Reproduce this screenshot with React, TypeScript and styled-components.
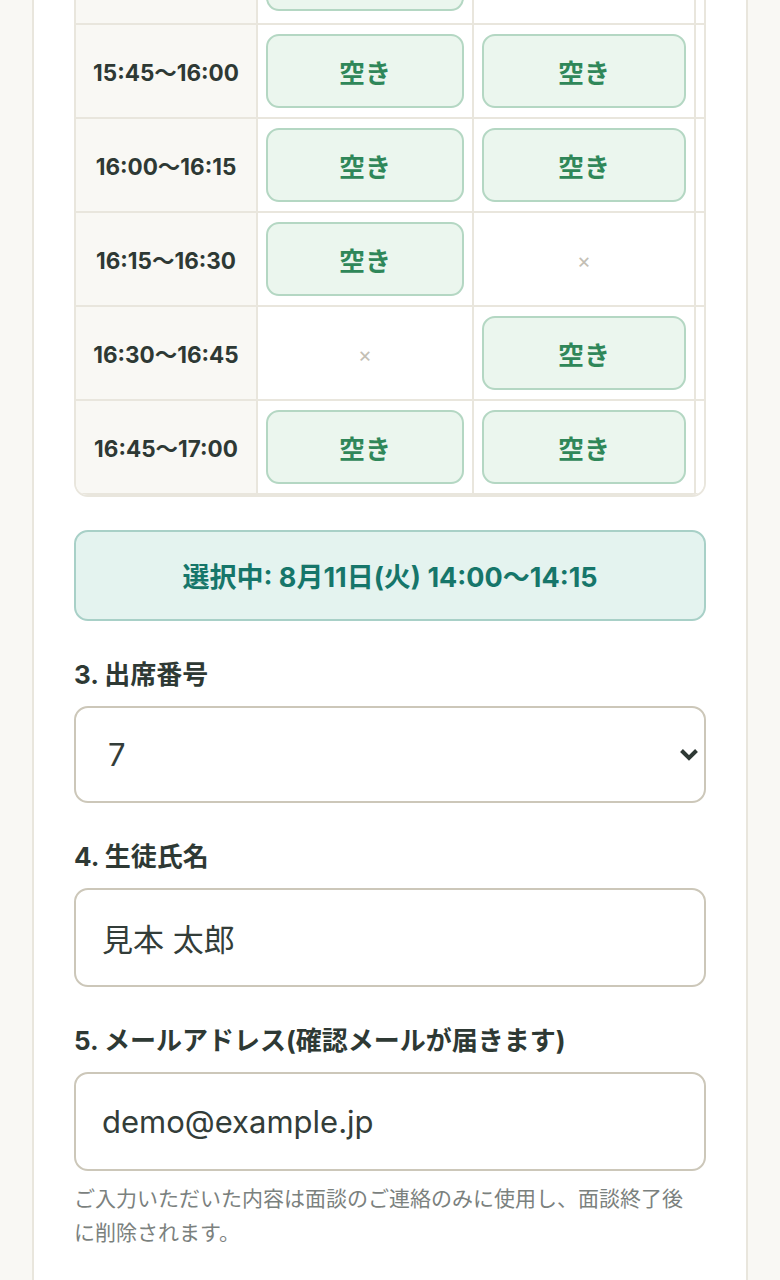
import React from "react";
import styled, { createGlobalStyle } from "styled-components";

const Global = createGlobalStyle`
  html, body { margin: 0; padding: 0; background: #f9f8f4; }
  body { font-family: "Inter", "Noto Sans CJK JP", sans-serif; color: #2e3934; overflow: hidden; }
  * { box-sizing: border-box; }
`;

const Page = styled.div`
  padding: 0 32px;
  min-height: 1280px;
`;

const Card = styled.main`
  background: #ffffff;
  border-left: 2px solid #e9e6dd;
  border-right: 2px solid #e9e6dd;
  padding: 0 40px 80px;
  min-height: 1400px;
`;

const TableWrap = styled.div`
  margin-top: -74px;
  border: 2px solid #e9e6dd;
  border-radius: 14px;
  overflow: hidden;
`;

const Table = styled.table`
  border-collapse: separate;
  border-spacing: 0;
  table-layout: fixed;
  width: 836px;
`;

const Td = styled.td<{ $time?: boolean }>`
  border-right: 2px solid #e9e6dd;
  border-bottom: 2px solid #e9e6dd;
  padding: 9px 8px;
  height: 94px;
  text-align: center;
  vertical-align: middle;
  background: ${(p) => (p.$time ? "#f9f8f4" : "#ffffff")};
  color: #2e3934;
  font-size: 22.5px;
  font-weight: 700;
  white-space: nowrap;
`;

const SlotButton = styled.button`
  width: 100%;
  height: 74px;
  border: 2px solid #b4d7c3;
  background: #ebf6ee;
  border-radius: 13px;
  color: #2f8759;
  font-family: "Inter", "Noto Sans CJK JP", sans-serif;
  font-size: 26px;
  font-weight: 700;
  cursor: pointer;
  padding: 0;
`;

const Cross = styled.span`
  color: #c4bfb5;
  font-size: 21px;
  font-weight: 400;
`;

const Selected = styled.div`
  margin-top: 33px;
  height: 91px;
  border: 2px solid #a8d0c7;
  background: #e4f3ef;
  border-radius: 14px;
  display: flex;
  align-items: center;
  justify-content: center;
  color: #16766a;
  font-size: 27px;
  font-weight: 700;
`;

const Field = styled.div`
  margin-top: 36px;
  display: flex;
  flex-direction: column;
`;

const Label = styled.label`
  font-size: 26px;
  font-weight: 700;
  line-height: 36px;
  color: #2e3934;
  margin-bottom: 13px;
`;

const SelectWrap = styled.div`
  position: relative;
`;

const Select = styled.select`
  appearance: none;
  -webkit-appearance: none;
  width: 100%;
  height: 97px;
  border: 2px solid #ccc7b9;
  border-radius: 14px;
  background: #ffffff;
  padding: 0 60px 0 32px;
  font-family: "Inter", "Noto Sans CJK JP", sans-serif;
  font-size: 31px;
  color: #333d39;
  outline: none;
`;

const Chevron = styled.svg`
  position: absolute;
  right: 7px;
  top: 50%;
  transform: translateY(-50%);
  pointer-events: none;
`;

const Input = styled.input`
  width: 100%;
  height: 99px;
  border: 2px solid #ccc7b9;
  border-radius: 14px;
  background: #ffffff;
  padding: 0 26px;
  font-family: "Inter", "Noto Sans CJK JP", sans-serif;
  font-size: 31px;
  color: #333d39;
  outline: none;
`;

const Note = styled.p`
  margin: 11px 0 0;
  padding-right: 10px;
  font-size: 21px;
  line-height: 34px;
  color: #7b817e;
`;

type Cell = "open" | "none";
const rows: { time: string; cells: Cell[] }[] = [
  { time: "15:45〜16:00", cells: ["open", "open"] },
  { time: "16:00〜16:15", cells: ["open", "open"] },
  { time: "16:15〜16:30", cells: ["open", "none"] },
  { time: "16:30〜16:45", cells: ["none", "open"] },
  { time: "16:45〜17:00", cells: ["open", "open"] },
];

export default function App() {
  return (
    <>
      <Global />
      <Page>
        <Card>
          <TableWrap>
            <Table>
              <colgroup>
                <col style={{ width: 182 }} />
                <col style={{ width: 216 }} />
                <col style={{ width: 222 }} />
                <col style={{ width: 216 }} />
              </colgroup>
              <tbody>
                <tr>
                  <Td $time aria-label="15:30〜15:45" />
                  <Td>
                    <SlotButton type="button" aria-label="空き" />
                  </Td>
                  <Td />
                  <Td />
                </tr>
                {rows.map((r) => (
                  <tr key={r.time}>
                    <Td $time>{r.time}</Td>
                    {r.cells.map((c, i) => (
                      <Td key={i}>
                        {c === "open" ? <SlotButton type="button">空き</SlotButton> : <Cross>×</Cross>}
                      </Td>
                    ))}
                    <Td />
                  </tr>
                ))}
              </tbody>
            </Table>
          </TableWrap>

          <Selected>選択中: 8月11日(火) 14:00〜14:15</Selected>

          <Field>
            <Label>3. 出席番号</Label>
            <SelectWrap>
              <Select defaultValue="7">
                {Array.from({ length: 40 }, (_, i) => (
                  <option key={i + 1} value={String(i + 1)}>
                    {i + 1}
                  </option>
                ))}
              </Select>
              <Chevron width="20" height="16" viewBox="0 0 20 16">
                <polyline points="2.5,3.5 10,11 17.5,3.5" fill="none" stroke="#2e3934" strokeWidth="4" />
              </Chevron>
            </SelectWrap>
          </Field>

          <Field>
            <Label>4. 生徒氏名</Label>
            <Input type="text" defaultValue="見本 太郎" />
          </Field>

          <Field>
            <Label>5. メールアドレス(確認メールが届きます)</Label>
            <Input type="email" defaultValue="demo@example.jp" />
            <Note>ご入力いただいた内容は面談のご連絡のみに使用し、面談終了後に削除されます。</Note>
          </Field>
        </Card>
      </Page>
    </>
  );
}
